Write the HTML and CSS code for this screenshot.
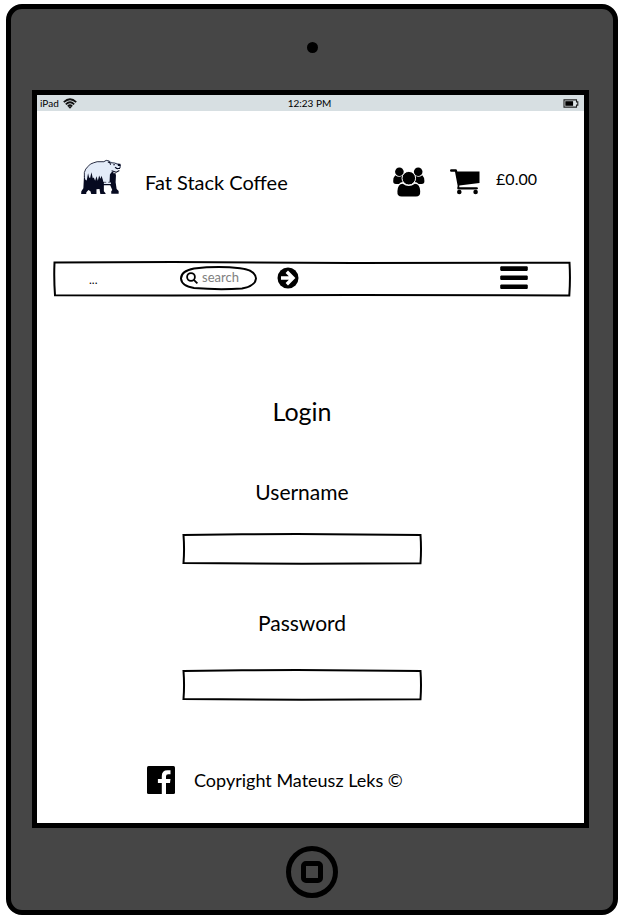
FILE: index.html
```html
<!DOCTYPE html>
<html lang="en">
<head>
<meta charset="utf-8">
<meta name="viewport" content="width=device-width, initial-scale=1">
<title>Fat Stack Coffee</title>
<link rel="stylesheet" href="styles.css">
</head>
<body>
<div class="device">
  <div class="bezel bezel-top"><span class="camera"></span></div>
  <div class="screen">
    <div class="status">
      <span class="carrier">iPad
        <svg width="14" height="11" viewBox="0 0 14 11" aria-hidden="true"><g fill="none" stroke="#111" stroke-width="1.8"><path d="M.8 4.1Q7-1.5 13.2 4.1"/><path d="M2.8 6.3Q7 2.3 11.2 6.3"/><path d="M4.8 8.3Q7 6.3 9.2 8.3"/></g><path d="M5.4 8.9Q7 7.7 8.6 8.9L7 10.7z" fill="#111"/></svg>
      </span>
      <span>12:23 PM</span>
      <svg class="battery" width="16" height="9" viewBox="0 0 16 9" aria-hidden="true"><path d="M1 .9h12.5v2h1.3v3.2h-1.3v2H1z" fill="#dfe6e8" stroke="#222" stroke-width="1.1"/><path d="M2.3 2.2h7.800v4.600H2.300z" fill="#000"/></svg>
    </div>

    <header class="header">
      <svg class="bear" viewBox="30 24 122 104" aria-hidden="true">
        <path fill="#e3ebf8" d="M43 92V64l6-14 12-12 16-6 25-2 8-3 9 1 7 5 12 1 8 4 6 2-2 12-9 3-3 5-8 4-2 34-36 6-46-6z"/>
        <path fill="#060a20" d="M42 72l4 14 4 2 4-22 3 12 3 3 4-18 4 18 3-2 4 10 4-14 4 14 4-16 4 10 3-9 4 12 3 14v20l5 6v14H87v-6l4-3-3-18-9 1v18l3 3v8H62v-6l3-4-4-13-6-4-6 7-1 9 5 4v7H37l-4-9 1-14 6-9z"/>
        <path fill="#060a20" d="M118 92l1-22 4-6 5-3 3 7 4-5 2 10-1 20 3 20 6 6v8h-22v-7l3-4-6-14z"/>
        <path fill="#060a20" d="M98 92h24v10H98z"/>
        <path fill="#e3ebf8" d="M101 94h7v-8h-5l4-11h3v11h4v8h8v4h-21z"/>
        <path fill="none" stroke="#060a20" stroke-width="2.500" d="M43 78V64l4-10 7-8 7-7 10-4 10-3h20l7-4 9 2 5 5 11 1 8 3 9 2-1 10-7 2-6-2"/>
        <path fill="none" stroke="#060a20" stroke-width="3" d="M113 33l6 2 2 6M129 41h5M134 48l6 4h9M124 59l14 4 9-5"/>
        <path fill="#060a20" d="M142 38h8v7h-7z"/>
      </svg>
      <span class="brand">Fat Stack Coffee</span>
      <a class="people" href="#" aria-label="Account">
        <svg width="32" height="30" viewBox="0 0 32 30"><circle cx="6.4" cy="4.7" r="4.3"/><circle cx="25.2" cy="4.7" r="4.3"/><path d="M2.3 8.3Q6.2 11.2 9.2 8.5L10 15Q7.4 15 6 17H3Q0 17 .2 14 .4 10 2.3 8.3zM29.3 8.3Q25.4 11.2 22.4 8.5L21.6 15Q24.2 15 25.6 17H28.6Q31.6 17 31.4 14 31.2 10 29.3 8.3z"/><circle cx="15.8" cy="11.2" r="6.8" stroke="#fff"/><path d="M9.7 16.8Q15.8 21.4 21.9 16.8 27 17.2 27.2 24.3 27.5 29.5 23 29.5H8.7Q4 29.5 4.4 24.3 4.7 17.2 9.7 16.8z"/></svg>
      </a>
      <a class="cart" href="#">
        <svg width="30" height="26" viewBox="0 0 30 26" aria-hidden="true"><path d="M1.3.3H6Q7 .3 7.3 2.5H29.5V14L9.3 16.4V18.3H26.5Q28 18.3 28 19.3T26.8 20.5H8Q7 20.5 7.3 18.6L7.7 17 5 2.7H1.2Q0 2.7 0 1.5T1.3.3z"/><circle cx="9.3" cy="23" r="2.3"/><circle cx="25.6" cy="23" r="2.3"/></svg>
        <span>£0.00</span>
      </a>
    </header>

    <nav class="nav">
      <svg class="sketch" viewBox="0 0 518 36" preserveAspectRatio="none" aria-hidden="true"><path d="M1.500 1.500L120 1 300 2 516.500 1.800Q517.500 18 516.300 34.500L300 34 120 34.600 2 34.200Q.8 18 1.500 1.500z"/></svg>
      <a class="more" href="#">...</a>
      <form class="search">
        <svg class="sketch" viewBox="0 0 77 24" preserveAspectRatio="none" aria-hidden="true"><path d="M14 2.500Q38-.2 60 2.200 75.500 4 76 12.500 75.500 20 62 22.500 38 24 14 22 1.500 20 1 12.500 1 5 14 2.500z"/></svg>
        <svg width="12" height="12" viewBox="0 0 12 12" aria-hidden="true"><g fill="none" stroke="#000" stroke-width="1.8"><circle cx="5" cy="5" r="3.9"/><path d="M7.8 7.8l3.600 3.600"/></g></svg>
        <input type="text" placeholder="search" aria-label="Search">
      </form>
      <button class="go" aria-label="Go"><svg width="22" height="22" viewBox="0 0 22 22"><circle cx="11" cy="11" r="10.5"/><path d="M4 11h11M9.800 4.800l6.200 6.200-6.200 6.200" fill="none" stroke="#fff" stroke-width="3.400"/></svg></button>
      <button class="menu" aria-label="Menu"><svg width="28" height="24" viewBox="0 0 28 24"><path d="M1 .3h26l.8.8v3l-.8.8H1l-.8-.8v-3zM1 9.400h26l.8.8v3l-.8.8H1l-.8-.8v-3zM1 18.400h26l.8.8v3l-.8.8H1l-.8-.8v-3z"/></svg></button>
    </nav>

    <main class="login">
      <h1>Login</h1>
      <label class="user-label" for="username">Username</label>
      <div class="field">
        <svg class="sketch" viewBox="0 0 240 32" preserveAspectRatio="none" aria-hidden="true"><path d="M1.500 2L60 1.300 115 1 238.500 2Q239.500 16 238.500 30.300L120 30.800 1.500 30Q2.600 16 1.500 2z"/></svg>
        <input id="username" type="text">
      </div>
      <label class="pass-label" for="password">Password</label>
      <div class="field">
        <svg class="sketch" viewBox="0 0 240 32" preserveAspectRatio="none" aria-hidden="true"><path d="M1.500 2L60 1.300 115 1 238.500 2Q239.500 16 238.500 30.300L120 30.800 1.500 30Q2.600 16 1.500 2z"/></svg>
        <input id="password" type="password">
      </div>
    </main>

    <footer class="footer">
      <a href="#" aria-label="Facebook"><svg width="28" height="28" viewBox="0 0 28 28"><rect width="28" height="28" rx="1.500"/><path fill="#fff" d="M14.800 28V17h-3.900v-4h3.900V10Q14.800 4.200 20.500 4.200h3v4h-2.300Q19 8.200 19 10.300V13h4.500L23 17h-4v11z"/></svg></a>
      <span>Copyright Mateusz Leks ©</span>
    </footer>
  </div>
  <div class="bezel bezel-bottom"><button class="home" aria-label="Home"><span></span></button></div>
</div>
</body>
</html>
```
FILE: styles.css
```css
* { box-sizing: border-box; }

body {
  margin: 0;
  padding: 4px 6px 6px;
  background: #fff;
  color: #000;
  font-family: Lato, "Liberation Sans", sans-serif;
}

svg { display: block; flex: none; }
a { color: inherit; text-decoration: none; }
button { padding: 0; border: 0; background: none; }
input {
  position: relative;
  width: 100%;
  border: 0;
  background: transparent;
  font: inherit;
  outline: 0;
}

.device {
  border: 5px solid #000;
  border-radius: 16px;
  background: #464646;
  padding: 0 21px;
}

.bezel {
  display: flex;
  align-items: center;
  justify-content: center;
}
.bezel-top { height: 81px; padding-bottom: 5px; }
.bezel-bottom { height: 82px; padding-top: 6px; }
.camera {
  width: 11px;
  height: 11px;
  border-radius: 50%;
  background: #000;
}
.home {
  display: grid;
  place-items: center;
  width: 52px;
  height: 52px;
  border: 5px solid #000;
  border-radius: 50%;
}
.home span {
  width: 22px;
  height: 22px;
  border: 5px solid #000;
  border-radius: 5px;
}

.screen { margin-right: 3px; border: 5px solid #000; background: #fff; }

.status {
  display: grid;
  grid-template-columns: 1fr auto 1fr;
  align-items: center;
  height: 16px;
  padding: 0 5px 0 3px;
  background: #d7dfe2;
  font-size: 10px;
  line-height: 16px;
}
.carrier { display: flex; align-items: center; gap: 4px; }
.battery { justify-self: end; }

.header {
  display: flex;
  align-items: center;
  height: 150px;
  padding: 0 47px 8px 43px;
}
.bear { width: 41px; height: 35px; margin-bottom: 12px; }
.brand { margin-left: 24px; font-size: 20px; line-height: 28px; }
.people { margin-left: auto; }
.cart {
  display: flex;
  align-items: flex-start;
  gap: 16px;
  margin-left: 25px;
  font-size: 16px;
  line-height: 20px;
}

.sketch {
  position: absolute;
  inset: 0;
  width: 100%;
  height: 100%;
  overflow: visible;
  fill: none;
  stroke: #000;
  stroke-width: 2px;
}

.nav {
  position: relative;
  display: flex;
  align-items: center;
  height: 36px;
  margin: 0 13px 0 16px;
  padding: 0 43px 3px 36px;
}
.nav a, .nav button { position: relative; }
.more { width: 91px; padding-top: 4px; font-size: 12px; line-height: 16px; }
.search {
  position: relative;
  display: flex;
  align-items: center;
  gap: 4px;
  width: 77px;
  height: 24px;
  padding: 0 6px;
}
.search input { min-width: 0; padding: 0 0 2px; font-size: 13px; line-height: 16px; }
.search input::placeholder { color: #808080; opacity: 1; }
.go { margin-left: 20px; }
.menu { margin-left: auto; }

.login {
  display: flex;
  flex-direction: column;
  align-items: center;
  padding: 98px 17px 0 0;
}
.login h1 { margin: 0; font-size: 25px; font-weight: 400; line-height: 32px; }
.login label { font-size: 21px; line-height: 28px; }
.user-label { margin: 51px 0 27px; }
.pass-label { margin: 44px 0 32px; }
.field { position: relative; width: 240px; height: 32px; }
.field input { height: 32px; padding: 0 8px; font-size: 16px; }

.footer {
  display: flex;
  align-items: center;
  gap: 19px;
  padding: 65px 0 29px 110px;
  font-size: 18px;
  line-height: 28px;
}
```
